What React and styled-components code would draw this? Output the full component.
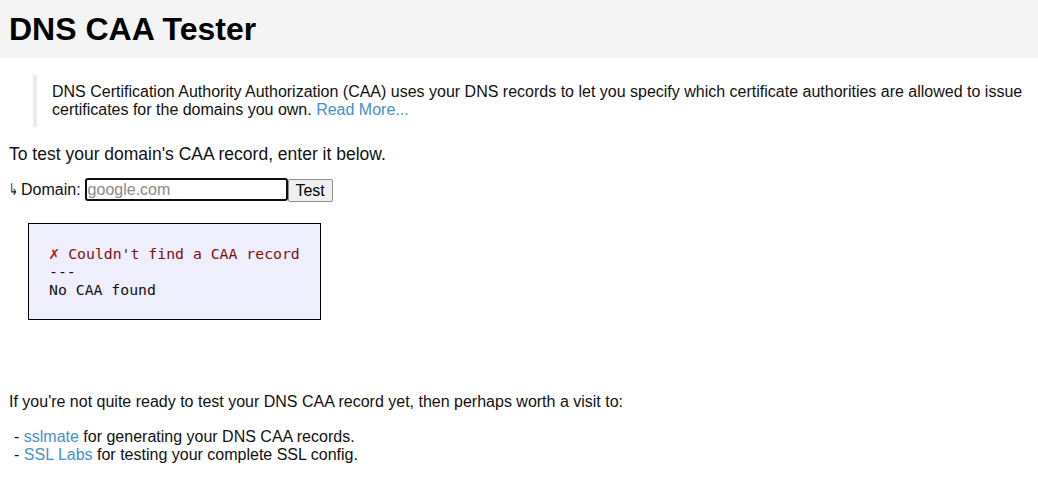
import React from 'react';
import styled, { createGlobalStyle } from 'styled-components';

const GlobalStyle = createGlobalStyle`
  body {
    margin: 0;
    background: #ffffff;
    color: #111111;
    font-family: "Liberation Sans", Arial, sans-serif;
    font-size: 16px;
  }
`;

// Header band
const Header = styled.header`
  background: #f4f4f4;
  height: 58px;
  display: flex;
  align-items: center;
  padding: 0 9px;
`;

const Title = styled.h1`
  margin: 0;
  font-size: 32px;
  font-weight: bold;
  color: #000000;
  line-height: 1;
`;

const Main = styled.main`
  padding: 0 9px;
`;

const Quote = styled.blockquote`
  margin: 17px 0 0 24px;
  padding: 8px 0 8px 15px;
  border-left: 4px solid #ebebeb;
  line-height: 18px;
`;

const Link = styled.a`
  color: #4590cc;
  text-decoration: none;
`;

const Lead = styled.p`
  margin: 18px 0 0;
  font-size: 17.5px;
  line-height: 18px;
`;

const Form = styled.form`
  display: flex;
  align-items: center;
  margin-top: 14px;
  line-height: 18px;
`;

// narrow hooked arrow before the label
const Arrow = styled.span`
  display: inline-block;
  width: 12px;
  font-size: 16px;
  transform: scaleX(0.65);
  transform-origin: left center;
`;

const Input = styled.input`
  box-sizing: border-box;
  width: 203px;
  height: 23px;
  margin-left: 4px;
  padding: 0 1px;
  border: 2px solid #101010;
  border-radius: 3px;
  font-family: inherit;
  font-size: 16px;
  outline: none;

  &::placeholder {
    color: #8a8a8a;
  }
`;

const Button = styled.button`
  box-sizing: border-box;
  height: 23px;
  width: 45px;
  margin-top: 2px;
  padding: 0;
  background: #efefef;
  border: 1px solid #8f8f8f;
  border-radius: 2px;
  font-family: inherit;
  font-size: 16px;
  color: #000;
`;

const Result = styled.pre`
  display: inline-block;
  margin: 21px 0 0 19px;
  padding: 20px;
  background: #eeeefc;
  border: 1px solid #000000;
  font-family: "DejaVu Sans Mono", "Liberation Mono", monospace;
  font-size: 14.8px;
  line-height: 18px;
  color: #111;
`;

const Error = styled.span`
  color: #7a1212;
`;

const Cross = styled.span`
  color: #b01818;
  font-weight: bold;
  font-size: 17px;
`;

const Note = styled.p`
  margin: 73px 0 0;
  line-height: 18px;
`;

const List = styled.ul`
  list-style: none;
  margin: 17px 0 0;
  padding: 0 0 0 5px;
  line-height: 18px;
`;

export default function App() {
  return (
    <>
      <GlobalStyle />
      <Header>
        <Title>DNS CAA Tester</Title>
      </Header>
      <Main>
        <Quote>
          DNS Certification Authority Authorization (CAA) uses your DNS records to let you specify
          which certificate authorities are allowed to issue certificates for the domains you own.{' '}
          <Link href="#">Read More...</Link>
        </Quote>
        <Lead>To test your domain's CAA record, enter it below.</Lead>
        <Form onSubmit={(e) => e.preventDefault()}>
          <Arrow>↳</Arrow>
          Domain:
          <Input placeholder="google.com" />
          <Button type="submit">Test</Button>
        </Form>
        <Result>
          <Error><Cross>✗</Cross> Couldn't find a CAA record</Error>
          {'\n---\nNo CAA found'}
        </Result>
        <Note>If you're not quite ready to test your DNS CAA record yet, then perhaps worth a visit to:</Note>
        <List>
          <li>- <Link href="#">sslmate</Link> for generating your DNS CAA records.</li>
          <li>- <Link href="#">SSL Labs</Link> for testing your complete SSL config.</li>
        </List>
      </Main>
    </>
  );
}
